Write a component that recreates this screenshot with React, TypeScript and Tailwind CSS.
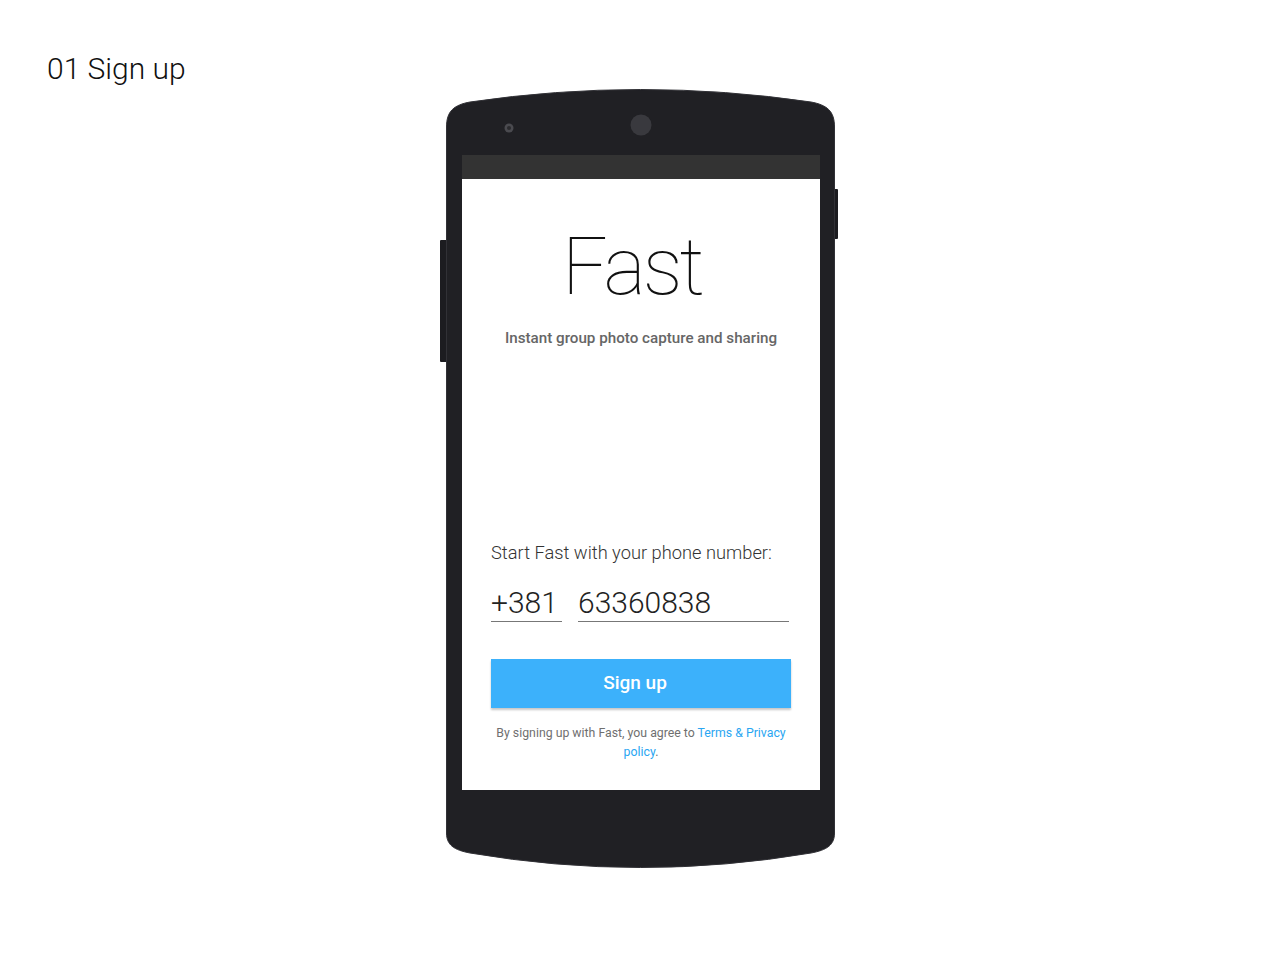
import React from "react";

function TopBezel() {
  return (
    <svg width="389" height="66" viewBox="0 0 389 66" className="block">
      <path
        d="M0.5,66 L0.5,38 C0.5,22 8,16 24,13 Q194.5,-12 365,13 C381,16 388.5,22 388.5,38 L388.5,66"
        fill="#202024"
        stroke="#313136"
        strokeWidth="1"
      />
      <circle cx="63" cy="39" r="4.5" fill="#4a4a4f" />
      <circle cx="63" cy="39" r="2" fill="#2a2a2e" />
      <circle cx="195" cy="36" r="10.5" fill="#39393e" />
    </svg>
  );
}

function BottomBezel() {
  return (
    <svg width="389" height="80" viewBox="0 0 389 80" className="block">
      <path
        d="M0.5,0 L0.5,43 C0.5,55 8,60 24,63 Q194.5,92 365,63 C381,60 388.5,55 388.5,43 L388.5,0"
        fill="#202024"
        stroke="#313136"
        strokeWidth="1"
      />
    </svg>
  );
}

function Phone() {
  return (
    <div className="relative w-[389px]">
      {/* side buttons */}
      <div className="absolute left-[-6px] top-[151px] h-[122px] w-[6px] rounded-l-[1px] bg-[#1c1c20]" />
      <div className="absolute right-[-3px] top-[100px] h-[50px] w-[3px] rounded-r-[1px] bg-[#1c1c20]" />

      <TopBezel />

      {/* screen */}
      <div className="flex flex-col border-x border-[#313136] bg-[#202024] pl-[15px] pr-[14px]">
        <div className="h-[24px] bg-[#333333]" />
        <div className="flex h-[611px] flex-col items-center bg-white px-[29px]">
          <div className="pr-[18px] pt-[48px] text-[80px] font-thin leading-none tracking-[-3px] text-[#111]">
            Fast
          </div>
          <div className="mt-[21px] text-[15.2px] font-medium leading-[20px] text-[#666]">
            Instant group photo capture and sharing
          </div>

          <div className="mt-auto w-full pb-[28px]">
            <div className="text-[18.3px] font-light leading-[24px] text-[#333]">
              Start Fast with your phone number:
            </div>
            <div className="mt-[20px] flex gap-[16px]">
              <div className="w-[71px] border-b border-[#777] text-[30px] font-light leading-[36px] text-[#222]">
                +381
              </div>
              <div className="mr-[2px] flex-1 border-b border-[#777] text-[30px] font-light leading-[36px] text-[#222]">
                63360838
              </div>
            </div>
            <button className="mt-[37px] flex h-[49px] w-full items-center justify-center bg-[#3cb1fb] pr-[12px] text-[19px] font-medium text-white shadow-[0_2px_2px_rgba(0,0,0,0.22)]">
              Sign up
            </button>
            <p className="mt-[16px] text-center text-[12.3px] leading-[19px] text-[#6f6f6f]">
              By signing up with Fast, you agree to{" "}
              <span className="text-[#2aa6f2]">Terms &amp; Privacy policy</span>.
            </p>
          </div>
        </div>
      </div>

      <BottomBezel />
    </div>
  );
}

export default function App() {
  return (
    <div className="relative h-[960px] w-[1280px] bg-white font-['Roboto',sans-serif]">
      <div className="pl-[47px] pt-[49px] text-[30px] font-light leading-[40px] text-[#111]">01 Sign up</div>
      <div className="flex justify-center pl-[1px]">
        <Phone />
      </div>
    </div>
  );
}
